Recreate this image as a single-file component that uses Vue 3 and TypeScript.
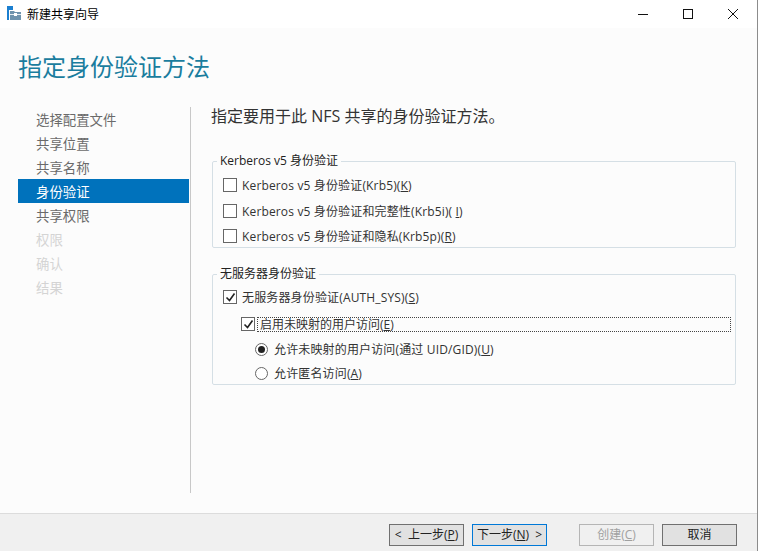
<script setup lang="ts">
const steps = [
  { label: '选择配置文件', state: 'done' },
  { label: '共享位置', state: 'done' },
  { label: '共享名称', state: 'done' },
  { label: '身份验证', state: 'active' },
  { label: '共享权限', state: 'done' },
  { label: '权限', state: 'off' },
  { label: '确认', state: 'off' },
  { label: '结果', state: 'off' },
]
</script>

<template>
  <div class="win">
    <div class="titlebar">
      <svg class="appicon" width="14" height="14" viewBox="0 0 14 14">
        <path d="M0 0h6v4H2v10H0z" fill="#1b7fd0" />
        <path d="M3 5h4l1 1h6v8H3z" fill="#6e93ad" />
        <rect x="3" y="8" width="11" height="1" fill="#e4ecf1" />
        <rect x="7" y="7" width="3" height="3" fill="#fff" />
      </svg>
      <span class="wintitle">新建共享向导</span>
      <div class="controls">
        <svg width="12" height="12" viewBox="0 0 12 12"><path d="M1 6.5h10" stroke="#111" fill="none" /></svg>
        <svg width="12" height="12" viewBox="0 0 12 12"><rect x="1.5" y="1.5" width="9" height="9" stroke="#111" fill="none" /></svg>
        <svg width="12" height="12" viewBox="0 0 12 12"><path d="M1 1l10 10M11 1L1 11" stroke="#111" fill="none" /></svg>
      </div>
    </div>
    <div class="content">
      <h1 class="heading">指定身份验证方法</h1>
      <div class="main">
        <nav class="nav">
          <div v-for="s in steps" :key="s.label" class="step" :class="s.state">{{ s.label }}</div>
        </nav>
        <div class="pane">
          <p class="intro">指定要用于此 NFS 共享的身份验证方法。</p>
          <fieldset class="group first">
            <legend>Kerberos v5 身份验证</legend>
            <label class="row"><span class="cb"></span><span>Kerberos v5 身份验证(Krb5)(<u>K</u>)</span></label>
            <label class="row gap1"><span class="cb"></span><span>Kerberos v5 身份验证和完整性(Krb5i)( <u>I</u>)</span></label>
            <label class="row"><span class="cb"></span><span>Kerberos v5 身份验证和隐私(Krb5p)(<u>R</u>)</span></label>
          </fieldset>
          <fieldset class="group second">
            <legend>无服务器身份验证</legend>
            <label class="row">
              <span class="cb"><svg width="11" height="11" viewBox="0 0 11 11"><path d="M1.5 5.5l3 3 5-7" stroke="#222" stroke-width="1.6" fill="none" /></svg></span>
              <span>无服务器身份验证(AUTH_SYS)(<u>S</u>)</span>
            </label>
            <label class="row sub">
              <span class="cb"><svg width="11" height="11" viewBox="0 0 11 11"><path d="M1.5 5.5l3 3 5-7" stroke="#222" stroke-width="1.6" fill="none" /></svg></span>
              <span class="focus">启用未映射的用户访问(<u>E</u>)</span>
            </label>
            <label class="row radio-row gap1">
              <span class="rd"><i></i></span><span>允许未映射的用户访问(通过 UID/GID)(<u>U</u>)</span>
            </label>
            <label class="row radio-row">
              <span class="rd"></span><span>允许匿名访问(<u>A</u>)</span>
            </label>
          </fieldset>
        </div>
      </div>
    </div>
    <div class="footer">
      <button class="btn">&lt;&nbsp; 上一步(<u>P</u>)</button>
      <button class="btn primary">下一步(<u>N</u>) &nbsp;&gt;</button>
      <button class="btn disabled">创建(<u>C</u>)</button>
      <button class="btn">取消</button>
    </div>
  </div>
</template>

<style scoped>
.win {
  width: 758px;
  height: 551px;
  box-sizing: border-box;
  border-right: 1px solid #8c8c8c;
  display: flex;
  flex-direction: column;
  font-family: "Open Sans", "Noto Sans CJK SC", sans-serif;
  font-size: 12px;
  color: #222;
  background: #fff;
  overflow: hidden;
}
.titlebar {
  height: 28px;
  flex: none;
  display: flex;
  align-items: center;
  padding-left: 7px;
  background: #fff;
}
.appicon { margin-right: 6px; margin-bottom: 2px; }
.wintitle { color: #000; }
.controls {
  margin-left: auto;
  display: flex;
  gap: 33px;
  padding-right: 18px;
  align-items: center;
}
.content {
  flex: 1;
  background: #fcfcfc;
  display: flex;
  flex-direction: column;
  min-height: 0;
}
.heading {
  margin: 19px 0 0 18px;
  height: 39px;
  font-weight: 400;
  font-size: 24px;
  line-height: 39px;
  color: #1a7d9e;
}
.main {
  display: flex;
  margin-top: 21px;
  flex: 1;
  min-height: 0;
}
.nav {
  width: 171px;
  margin-left: 18px;
  height: 385px;
  flex: none;
}
.step {
  height: 24px;
  line-height: 26px;
  padding-left: 18px;
  font-size: 13.4px;
  color: #6a6a6a;
}
.step.active { background: #0072bc; color: #fff; }
.step.off { color: #d4d4d4; }
.pane {
  margin-left: 1px;
  width: 546px;
  height: 386px;
  border-left: 1px solid #c8c8c8;
  padding-left: 20px;
  box-sizing: border-box;
  flex: none;
}
.intro {
  margin: 0;
  font-size: 16px;
  line-height: 18px;
  color: #333;
}
.group {
  margin: 0 0 0 1px;
  padding: 0;
  width: 524px;
  box-sizing: border-box;
  border: 1px solid #d5dfe5;
  border-radius: 2px;
  min-inline-size: 0;
}
.group.first { margin-top: 29px; height: 94px; padding-top: 4px; }
.group.second { margin-top: 19px; height: 118px; padding-top: 4px; }
.group legend {
  margin-left: 4px;
  padding: 0 3px;
  font-size: 12px;
  line-height: 14px;
  color: #222;
}
.row {
  display: flex;
  align-items: center;
  height: 25px;
  padding-left: 10px;
  gap: 5px;
  color: #333;
  font-size: 12px;
  letter-spacing: 0.15px;
  white-space: nowrap;
}
.row.gap1 { margin-top: 1px; }
.group.second .row { height: 24px; }
.row.sub { padding-left: 28px; gap: 3px; margin-top: 3px; }
.row.radio-row { padding-left: 42px; gap: 6px; }
.cb {
  width: 12px;
  height: 12px;
  border: 1px solid #666;
  background: #fff;
  flex: none;
  display: flex;
  align-items: center;
  justify-content: center;
}
.rd {
  width: 11px;
  height: 11px;
  border: 1px solid #666;
  border-radius: 50%;
  background: #fff;
  flex: none;
  display: flex;
  align-items: center;
  justify-content: center;
}
.rd i {
  width: 7px;
  height: 7px;
  border-radius: 50%;
  background: #222;
}
.focus {
  border: 1px dotted #444;
  width: 474px;
  height: 15px;
  line-height: 13px;
  box-sizing: border-box;
  display: block;
  margin-left: -1px;
  padding-left: 2px;
  letter-spacing: 0;
}
.footer {
  flex: none;
  height: 38px;
  box-sizing: border-box;
  background: #f0f0f0;
  border-top: 1px solid #dcdcdc;
  display: flex;
  align-items: flex-start;
  padding: 10px 0 0 389px;
}
.btn {
  width: 75px;
  height: 22px;
  box-sizing: border-box;
  border: 1px solid #707070;
  background: #e1e1e1;
  font-family: inherit;
  font-size: 12px;
  line-height: 18px;
  padding: 0;
  color: #222;
  margin-right: 8px;
}
.btn.primary { border: 1px solid #0078d7; }
.btn.disabled {
  margin-left: 24px;
  border-color: #b5b5b5;
  background: #f0f0f0;
  color: #a0a0a0;
}
</style>
